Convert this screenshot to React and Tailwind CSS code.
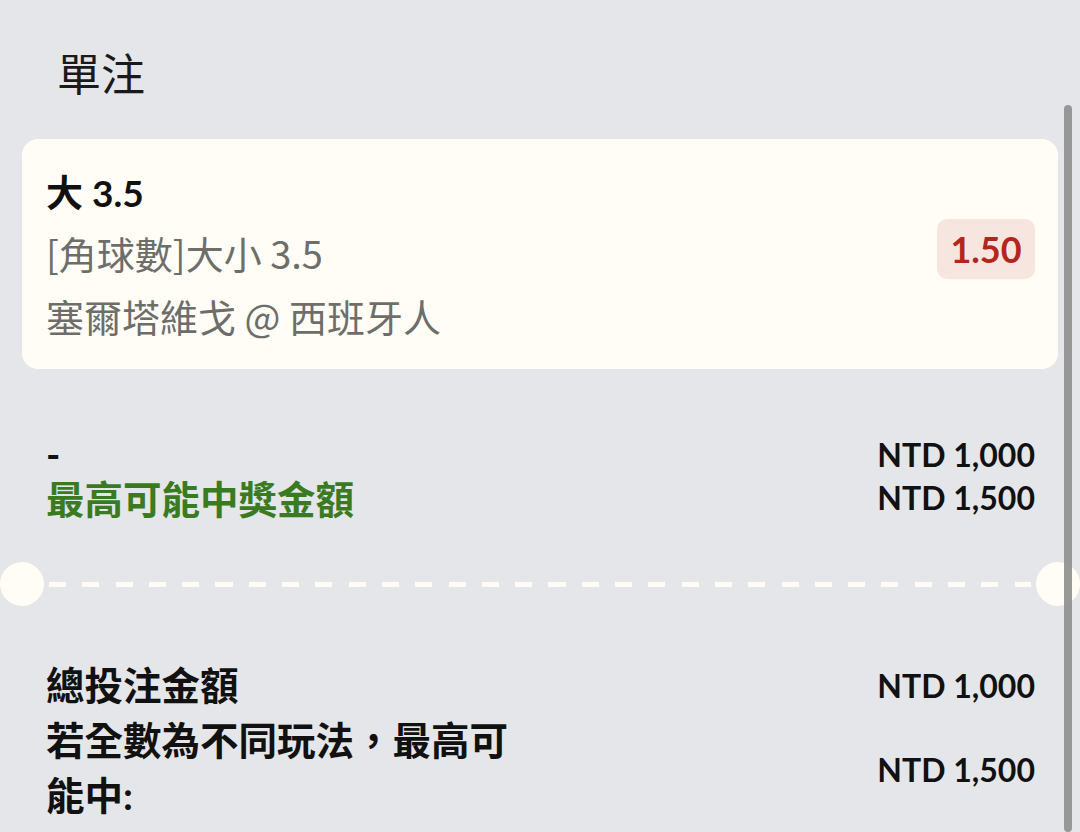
const font = "font-['Lato','Noto_Sans_CJK_TC',sans-serif]";

function Row({ left, right, className = '' }) {
  return (
    <div className={`flex items-center justify-between ${className}`}>
      <div>{left}</div>
      <div className="text-right">{right}</div>
    </div>
  );
}

export default function App() {
  return (
    <div className={`relative w-[1080px] h-[832px] overflow-hidden bg-[#e5e6e9] ${font}`}>
      <h1 className="pl-[57px] pt-[46px] text-[44px] leading-[56px] font-normal text-[#1a1a1a]">單注</h1>

      {/* selection card */}
      <div className="mx-[22px] mt-[37px] flex h-[230px] items-center justify-between rounded-[16px] bg-[#fffdf5] pl-[24px] pr-[23px]">
        <div className="leading-[63px]">
          <div className="text-[37px] font-bold text-[#111]">大 3.5</div>
          <div className="-mt-[3px] font-['Noto_Sans_CJK_TC',sans-serif] text-[38px] text-[#6d6d6a]">
            <div>[角球數]大小 3.5</div>
            <div>塞爾塔維戈 @ 西班牙人</div>
          </div>
        </div>
        <div className="mb-[10px] flex h-[60px] w-[98px] items-center justify-center rounded-[10px] bg-[#f7e6df] text-[36px] font-bold text-[#b3261e]">
          1.50
        </div>
      </div>

      {/* stake / potential win */}
      <div className="mt-[63px] flex justify-between pl-[46px] pr-[45px]">
        <div className="text-[38.5px] font-bold leading-[45px]">
          <div className="text-[#111]">-</div>
          <div className="text-[#3a7b22]">最高可能中獎金額</div>
        </div>
        <div className="pt-[1px] text-right text-[32px] font-bold leading-[43px] text-[#111]">
          <div>NTD 1,000</div>
          <div>NTD 1,500</div>
        </div>
      </div>

      {/* ticket tear line */}
      <div className="mt-[40px] flex items-center">
        <div className="h-[44px] w-[44px] shrink-0 rounded-full bg-[#fffdf5]" />
        <div className="mx-[5px] h-[5px] flex-1 bg-[repeating-linear-gradient(90deg,#fffdf5_0_17px,transparent_17px_33.3px)]" />
        <div className="h-[44px] w-[44px] shrink-0 rounded-full bg-[#fffdf5]" />
      </div>

      {/* totals */}
      <div className="mt-[52px] pl-[46px] pr-[45px] text-[#111]">
        <Row
          left={<span className="text-[38.5px] font-bold leading-[55px]">總投注金額</span>}
          right={<span className="text-[32px] font-bold">NTD 1,000</span>}
        />
        <Row
          left={<div className="w-[480px] text-[38.5px] font-bold leading-[55px]">若全數為不同玩法，最高可能中:</div>}
          right={<span className="mt-[3px] block text-[32px] font-bold">NTD 1,500</span>}
        />
      </div>

      {/* scrollbar overlay */}
      <div className="absolute right-[8px] top-[105px] bottom-0 w-[8px] rounded-full bg-[#8e8e8e]/90" />
    </div>
  );
}
